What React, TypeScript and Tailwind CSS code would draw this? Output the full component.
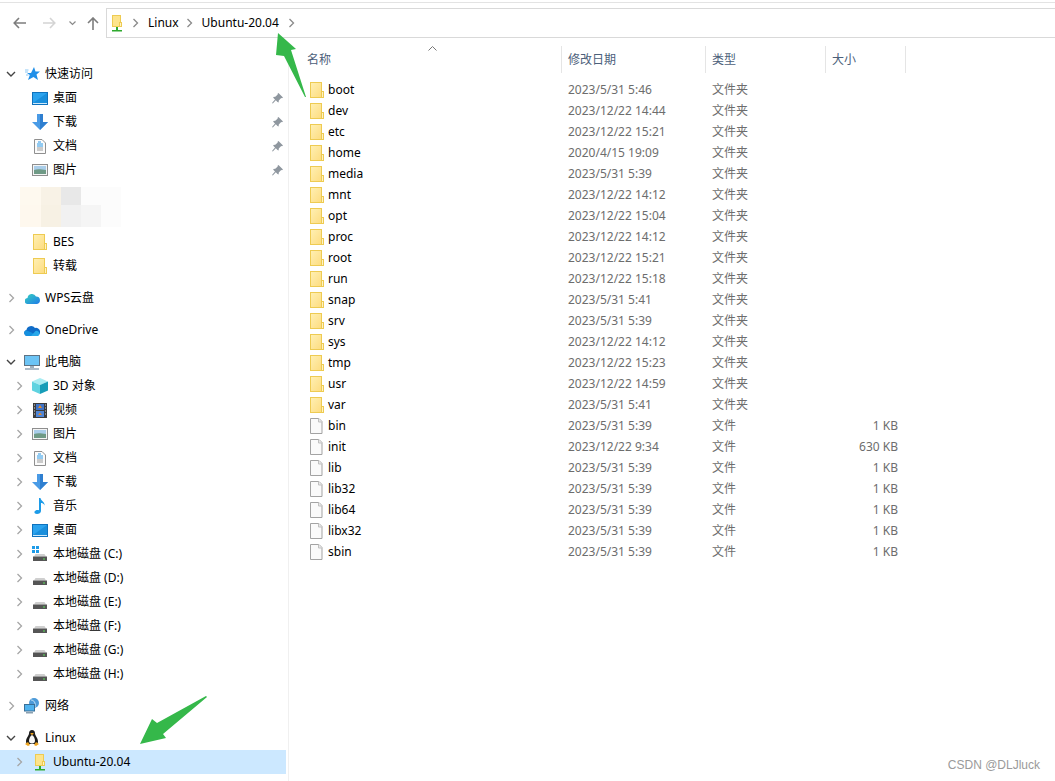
import React from 'react';

type IconProps = {className?: string};

/* ================= DATA ================= */
const folders: [string, string][] = [
  ['boot', '2023/5/31 5:46'],
  ['dev', '2023/12/22 14:44'],
  ['etc', '2023/12/22 15:21'],
  ['home', '2020/4/15 19:09'],
  ['media', '2023/5/31 5:39'],
  ['mnt', '2023/12/22 14:12'],
  ['opt', '2023/12/22 15:04'],
  ['proc', '2023/12/22 14:12'],
  ['root', '2023/12/22 15:21'],
  ['run', '2023/12/22 15:18'],
  ['snap', '2023/5/31 5:41'],
  ['srv', '2023/5/31 5:39'],
  ['sys', '2023/12/22 14:12'],
  ['tmp', '2023/12/22 15:23'],
  ['usr', '2023/12/22 14:59'],
  ['var', '2023/5/31 5:41'],
];

const files: [string, string, string][] = [
  ['bin', '2023/5/31 5:39', '1 KB'],
  ['init', '2023/12/22 9:34', '630 KB'],
  ['lib', '2023/5/31 5:39', '1 KB'],
  ['lib32', '2023/5/31 5:39', '1 KB'],
  ['lib64', '2023/5/31 5:39', '1 KB'],
  ['libx32', '2023/5/31 5:39', '1 KB'],
  ['sbin', '2023/5/31 5:39', '1 KB'],
];

/* ================= ICONS ================= */
function FolderIcon() {
  return (
    <svg width="14" height="16" viewBox="0 0 14 16">
      <defs>
        <linearGradient id="fold" x1="0" y1="0" x2="1" y2="1">
          <stop offset="0" stopColor="#fff0b4" />
          <stop offset="1" stopColor="#fddc80" />
        </linearGradient>
      </defs>
      <rect x="0.5" y="0.5" width="11" height="15" fill="url(#fold)" stroke="#eecb52" />
      <rect x="11.5" y="9.5" width="2" height="6" fill="#fff3c4" stroke="#eecb52" />
    </svg>
  );
}

function FileIcon() {
  return (
    <svg width="13" height="16" viewBox="0 0 13 16">
      <path d="M.5.5h8.5l3 3v12H.5z" fill="#fafafa" stroke="#a3a3a3" />
      <path d="M8.500.5v3.500h3.500" fill="#e8e8e8" stroke="#c0c0c0" />
    </svg>
  );
}

function DriveIcon({windows}: {windows?: boolean}) {
  return (
    <svg width="16" height="16" viewBox="0 0 16 16">
      {windows && (
        <g fill="#1e9be8">
          <rect x="0" y="0" width="3" height="3" />
          <rect x="4" y="0" width="3" height="3" />
          <rect x="0" y="4" width="3" height="3" />
          <rect x="4" y="4" width="3" height="3" />
        </g>
      )}
      <path d="M2 10.500l1.500-2.500h9l1.500 2.500z" fill="#cfcfcf" />
      <rect x="1" y="10.500" width="14" height="4.500" fill="#555" />
      <rect x="11" y="12.500" width="2" height="1" fill="#5be05b" />
    </svg>
  );
}

function DesktopIcon() {
  return (
    <svg width="16" height="13" viewBox="0 0 16 13">
      <rect x="0.500" y="0.500" width="15" height="12" fill="#2ba3ee" stroke="#0f72bd" />
      <path d="M1 11L15 1v10z" fill="#1a8fdc" />
      <rect x="1" y="11" width="14" height="1" fill="#cfe9fa" />
    </svg>
  );
}

function DownloadIcon() {
  return (
    <svg width="16" height="16" viewBox="0 0 16 16">
      <path d="M5 0h6v8h5l-8 8-8-8h5z" fill="#4a9be6" />
      <path d="M8 0h3v8h5l-8 8z" fill="#2f7fd0" />
    </svg>
  );
}

function DocIcon() {
  return (
    <svg width="12" height="15" viewBox="0 0 12 15">
      <path d="M.5.500h7.500l3.500 3.500v10.500H.5z" fill="#fbfbfb" stroke="#8f8f8f" />
      <path d="M4 3h3M3 5h6M3 7h6" stroke="#2b9ae8" strokeWidth="1" />
      <path d="M3 9h6M3 11h6" stroke="#9a9a9a" strokeWidth="1" />
    </svg>
  );
}

function PictureIcon() {
  return (
    <svg width="16" height="12" viewBox="0 0 16 12">
      <rect x="0.500" y="0.500" width="15" height="11" fill="#f5f5f5" stroke="#8e8e8e" />
      <rect x="2" y="2" width="12" height="4" fill="#a9cde9" />
      <path d="M2 6c3-1 6-1 12 0v4H2z" fill="#6f9a86" />
    </svg>
  );
}

function PinIcon() {
  return (
    <svg width="11" height="11" viewBox="0 0 11 11">
      <path d="M6.500 0l4.500 4.500-1 .8-.8-.3L6.800 7.400 6.600 9.500 5.500 9 3.800 7.200.8 10.500 0 10l3-3.600L1.500 5 1.200 4l2.100-.2L5.700 1.500 5.600.8z" fill="#8f979f" />
    </svg>
  );
}

function StarIcon() {
  return (
    <svg width="15" height="14" viewBox="0 0 15 14">
      <path d="M9 0l1.500 4.500H15l-3.500 3L13 13 8.500 10 3 13l1.800-5L2 6h4z" fill="#1f8fe8" />
      <path d="M0 5h3M1 8h2.500M0 3h3.500" stroke="#8cc8f5" strokeWidth="1" />
    </svg>
  );
}

function WpsCloud() {
  return (
    <svg width="15" height="11" viewBox="0 0 15 11">
      <defs>
        <linearGradient id="wps" x1="0" y1="0" x2="1" y2="1">
          <stop offset="0" stopColor="#35d0c0" />
          <stop offset="1" stopColor="#1f7be8" />
        </linearGradient>
      </defs>
      <path d="M3 11a3 3 0 0 1-.5-6A4.500 4.500 0 0 1 11 3.500 3.800 3.800 0 0 1 12 11z" fill="url(#wps)" />
    </svg>
  );
}

function OneDriveIcon() {
  return (
    <svg width="16" height="11" viewBox="0 0 16 11">
      <path d="M3 11a3 3 0 0 1-.6-5.900A4.800 4.800 0 0 1 11 3a3.800 3.800 0 0 1 2 8z" fill="#0f6cc8" />
      <path d="M3 11a3 3 0 0 1-1-5.700l5 2 6 3.700z" fill="#1490df" />
      <path d="M13 11H7l4.500-5a2.800 2.800 0 0 1 2.500 5z" fill="#28a8ea" />
    </svg>
  );
}

function PcIcon() {
  return (
    <svg width="16" height="15" viewBox="0 0 16 15">
      <rect x="0.500" y="0.500" width="15" height="10" fill="#6cc4f5" stroke="#5f7384" />
      <rect x="6" y="11" width="4" height="2" fill="#9fb0bd" />
      <rect x="1" y="13" width="14" height="2" fill="#aebcc8" />
    </svg>
  );
}

function CubeIcon() {
  return (
    <svg width="16" height="16" viewBox="0 0 16 16">
      <path d="M8 0l8 3.500L8 7 0 3.500z" fill="#a8ecf2" />
      <path d="M0 3.500L8 7v9l-8-3.500z" fill="#5fd3e0" />
      <path d="M16 3.500L8 7v9l8-3.500z" fill="#179db8" />
    </svg>
  );
}

function FilmIcon() {
  return (
    <svg width="14" height="15" viewBox="0 0 14 15">
      <rect width="14" height="15" fill="#3c3c3c" />
      <rect x="3" y="1" width="8" height="6" fill="#3f74c9" />
      <rect x="3" y="8" width="8" height="6" fill="#4f86d8" />
      <path d="M5 5l2-3 2 3zM5 12l2-2.500 2 2.500z" fill="#e08a2b" />
      <path d="M1 2h1M1 5h1M1 8h1M1 11h1M12 2h1M12 5h1M12 8h1M12 11h1" stroke="#d8d8d8" />
    </svg>
  );
}

function MusicIcon() {
  return (
    <svg width="12" height="16" viewBox="0 0 12 16">
      <path d="M5 0h1.500c.3 3 4.500 3.500 4 7.500C10 5.500 8 5 7 5v8c0 2-2 3-4 3S0 14.800.6 13.500C1.200 12 3.500 11.500 5 12.300z" fill="#1c9be8" />
    </svg>
  );
}

function NetworkIcon() {
  return (
    <svg width="16" height="16" viewBox="0 0 16 16">
      <circle cx="10" cy="5" r="5" fill="#4d9ad8" />
      <path d="M7 2c3 0 5 3 4 7" stroke="#bfe0f5" fill="none" />
      <rect x="0.500" y="6.500" width="10" height="6.500" fill="#4fb2ee" stroke="#3b6f96" />
      <rect x="2" y="14" width="7" height="1.500" fill="#8aa0b0" />
    </svg>
  );
}

function TuxIcon() {
  return (
    <svg width="14" height="16" viewBox="0 0 14 16">
      <path d="M7 0c2 0 3 1.500 3 3.500 0 2 3 4.500 3 8 0 1-.5 2-1 2.500H2c-.5-.5-1-1.500-1-2.500 0-3.500 3-6 3-8C4 1.500 5 0 7 0z" fill="#1d1d1d" />
      <path d="M7 5c-1.800 1-3 3.500-3 6 0 1 .8 2.500 3 2.500s3-1.500 3-2.500c0-2.500-1.200-5-3-6z" fill="#f7f7f7" />
      <path d="M6 3h2l.8.800L7 5 5.200 3.800z" fill="#eea41f" />
      <path d="M0 14l3-2 2 3-2 1zM14 14l-3-2-2 3 2 1z" fill="#eea41f" />
    </svg>
  );
}

function DistroIcon() {
  return (
    <svg width="10" height="17" viewBox="0 0 10 17">
      <rect x="0.500" y="0.500" width="8" height="11" fill="#fde48c" stroke="#eecb52" />
      <rect x="7.500" y="7.500" width="2" height="4" fill="#fff3c4" stroke="#eecb52" />
      <rect x="4" y="12" width="2" height="3" fill="#2faa2f" />
      <rect x="0" y="15" width="10" height="1.500" fill="#2faa2f" />
    </svg>
  );
}

function ChevronRight({className = 'text-[#a6a6a6]'}: IconProps) {
  return (
    <svg width="7" height="10" viewBox="0 0 7 10" className={className}>
      <path d="M1.500 1l4 4-4 4" fill="none" stroke="currentColor" strokeWidth="1.300" />
    </svg>
  );
}

function ChevronDown() {
  return (
    <svg width="10" height="7" viewBox="0 0 10 7" className="text-[#444]">
      <path d="M1 1l4 4 4-4" fill="none" stroke="currentColor" strokeWidth="1.400" />
    </svg>
  );
}

/* ================= SIDEBAR ================= */
function TreeRow({
  indent,
  open,
  arrow = true,
  icon,
  label,
  pinned,
  selected,
  className = '',
}: {
  indent?: boolean;
  open?: boolean;
  arrow?: boolean;
  icon: React.ReactNode;
  label: string;
  pinned?: boolean;
  selected?: boolean;
  className?: string;
}) {
  return (
    <div className={`flex items-center h-6 ${selected ? 'bg-[#cce8ff]' : ''} ${className}`}>
      <span className={`flex justify-center w-[10px] ${indent ? 'ml-[14px]' : 'ml-[6px]'}`}>
        {arrow && (open ? <ChevronDown /> : <ChevronRight />)}
      </span>
      <span className="flex justify-center w-4 ml-[8px]">{icon}</span>
      <span className="leading-[22px] ml-[5px] text-black">{label}</span>
      {pinned && (
        <span className="ml-auto mr-[3px]">
          <PinIcon />
        </span>
      )}
    </div>
  );
}

function Sidebar() {
  return (
    <div className="w-[286px] shrink-0 pt-[1px]">
      <TreeRow open icon={<StarIcon />} label="快速访问" />
      <TreeRow indent arrow={false} icon={<DesktopIcon />} label="桌面" pinned />
      <TreeRow indent arrow={false} icon={<DownloadIcon />} label="下载" pinned />
      <TreeRow indent arrow={false} icon={<DocIcon />} label="文档" pinned />
      <TreeRow indent arrow={false} icon={<PictureIcon />} label="图片" pinned />

      {/* blurred out rows */}
      <div className="h-12 pt-[5px] pl-[20px]">
        <div className="flex h-[18px]">
          <div className="w-[21px] bg-[#fef9ef]" />
          <div className="w-5 bg-[#f8f2e6]" />
          <div className="w-5 bg-[#e8e8e8]" />
          <div className="w-10 bg-[#fcfcfc]" />
        </div>
        <div className="flex h-[22px]">
          <div className="w-[21px] bg-[#fef8ee]" />
          <div className="w-5 bg-[#f7f1e4]" />
          <div className="w-5 bg-[#f1f1f1]" />
          <div className="w-5 bg-[#f5f5f5]" />
          <div className="w-5 bg-[#fcfcfc]" />
        </div>
      </div>

      <TreeRow indent arrow={false} icon={<FolderIcon />} label="BES" />
      <TreeRow indent arrow={false} icon={<FolderIcon />} label="转载" />
      <TreeRow className="mt-2" icon={<WpsCloud />} label="WPS云盘" />
      <TreeRow className="mt-2" icon={<OneDriveIcon />} label="OneDrive" />
      <TreeRow className="mt-2" open icon={<PcIcon />} label="此电脑" />
      <TreeRow indent icon={<CubeIcon />} label="3D 对象" />
      <TreeRow indent icon={<FilmIcon />} label="视频" />
      <TreeRow indent icon={<PictureIcon />} label="图片" />
      <TreeRow indent icon={<DocIcon />} label="文档" />
      <TreeRow indent icon={<DownloadIcon />} label="下载" />
      <TreeRow indent icon={<MusicIcon />} label="音乐" />
      <TreeRow indent icon={<DesktopIcon />} label="桌面" />
      <TreeRow indent icon={<DriveIcon windows />} label="本地磁盘 (C:)" />
      <TreeRow indent icon={<DriveIcon />} label="本地磁盘 (D:)" />
      <TreeRow indent icon={<DriveIcon />} label="本地磁盘 (E:)" />
      <TreeRow indent icon={<DriveIcon />} label="本地磁盘 (F:)" />
      <TreeRow indent icon={<DriveIcon />} label="本地磁盘 (G:)" />
      <TreeRow indent icon={<DriveIcon />} label="本地磁盘 (H:)" />
      <TreeRow className="mt-2" icon={<NetworkIcon />} label="网络" />
      <TreeRow className="mt-2" open icon={<TuxIcon />} label="Linux" />
      <TreeRow indent selected icon={<DistroIcon />} label="Ubuntu-20.04" />
    </div>
  );
}

/* ================= FILE LIST ================= */
function HeaderCell({label, className}: {label: string; className: string}) {
  return (
    <div className={`h-[27px] border-r border-[#e5e5e5] pl-[6px] leading-[27px] text-[#4c607a] ${className}`}>
      {label}
    </div>
  );
}

function FileRow({
  name,
  date,
  type,
  size,
  icon,
}: {
  name: string;
  date: string;
  type: string;
  size?: string;
  icon: React.ReactNode;
}) {
  return (
    <div className="flex items-center h-[21px]">
      <div className="flex items-center w-[272px] pl-5">
        <span className="flex w-[14px]">{icon}</span>
        <span className="ml-[4px] text-black">{name}</span>
      </div>
      <div className="w-[144px] pl-[6px] text-[#6d6d6d]">{date}</div>
      <div className="w-[120px] pl-[6px] text-[#6d6d6d]">{type}</div>
      <div className="w-[72px] text-right text-[#6d6d6d]">{size}</div>
    </div>
  );
}

function FileList() {
  return (
    <div className="flex-1 ml-[2px] border-l border-[#f0f0f0] pl-[1px] -mt-[15px] h-[737px]">
      <div className="relative flex">
        <svg width="9" height="5" viewBox="0 0 9 5" className="absolute left-[138px] top-[0px] text-[#777]">
          <path d="M.5 4.500l4-4 4 4" fill="none" stroke="currentColor" />
        </svg>
        <HeaderCell label="名称" className="w-[272px] pl-[17px]" />
        <HeaderCell label="修改日期" className="w-[144px]" />
        <HeaderCell label="类型" className="w-[120px]" />
        <HeaderCell label="大小" className="w-[80px]" />
      </div>
      <div className="pt-[6px]">
        {folders.map(([name, date]) => (
          <FileRow key={name} name={name} date={date} type="文件夹" icon={<FolderIcon />} />
        ))}
        {files.map(([name, date, size]) => (
          <FileRow key={name} name={name} date={date} type="文件" size={size} icon={<FileIcon />} />
        ))}
      </div>
    </div>
  );
}

/* ================= PAGE ================= */
export default function App() {
  return (
    <div
      className="relative w-[1055px] h-[781px] overflow-hidden bg-white text-[12px]"
      style={{fontFamily: '"Noto Sans", "Noto Sans CJK SC", sans-serif'}}>
      {/* Top strip */}
      <div className="mt-[2px] h-px bg-[#e3e3e3]" />

      {/* Navigation bar */}
      <div className="flex items-center h-[30px] mt-[5px]">
        <div className="flex items-center w-[106px] h-full text-[#8a8a8a]">
          <svg width="13" height="12" viewBox="0 0 13 12" className="ml-[13px]">
            <path d="M6 1L1.200 6 6 11M1.500 6H13" fill="none" stroke="#7d7d7d" strokeWidth="1.600" />
          </svg>
          <svg width="13" height="12" viewBox="0 0 13 12" className="ml-[17px]">
            <path d="M7 1l4.800 5L7 11M11.500 6H0" fill="none" stroke="#d4d4d4" strokeWidth="1.600" />
          </svg>
          <svg width="7" height="5" viewBox="0 0 7 5" className="ml-[13px]">
            <path d="M.5.500l3 3 3-3" fill="none" stroke="#8a8a8a" strokeWidth="1.200" />
          </svg>
          <svg width="12" height="13" viewBox="0 0 12 13" className="ml-[11px]">
            <path d="M1 6l5-5 5 5M6 1.500V13" fill="none" stroke="#7d7d7d" strokeWidth="1.600" />
          </svg>
        </div>
        <div className="flex items-center flex-1 h-full border border-r-0 border-[#d9d9d9] pl-[5px]">
          <DistroIcon />
          <span className="ml-[10px]">
            <ChevronRight className="text-[#8a8a8a]" />
          </span>
          <span className="ml-[9px] text-black leading-[26px]">Linux</span>
          <span className="ml-[7px]">
            <ChevronRight className="text-[#8a8a8a]" />
          </span>
          <span className="ml-[9px] text-black leading-[26px]">Ubuntu-20.04</span>
          <span className="ml-[9px]">
            <ChevronRight className="text-[#8a8a8a]" />
          </span>
        </div>
      </div>

      {/* Body */}
      <div className="flex mt-[23px]">
        <Sidebar />
        <FileList />
      </div>

      {/* Annotation arrows */}
      <svg width="1055" height="781" viewBox="0 0 1055 781" className="absolute inset-0 pointer-events-none">
        <polygon points="278,33 296,49 291,50 306,97 305,97 284,56 276,55" fill="#35b84a" />
        <polygon points="206,696 207,697 163,734 166,738 140,744 152,719 157,723" fill="#35b84a" />
      </svg>

      {/* Watermark */}
      <div
        className="absolute right-[15px] bottom-[7px] text-[12px] text-[#9a9a9a]"
        style={{fontFamily: '"Liberation Sans", sans-serif'}}>
        CSDN @DLJluck
      </div>
    </div>
  );
}
